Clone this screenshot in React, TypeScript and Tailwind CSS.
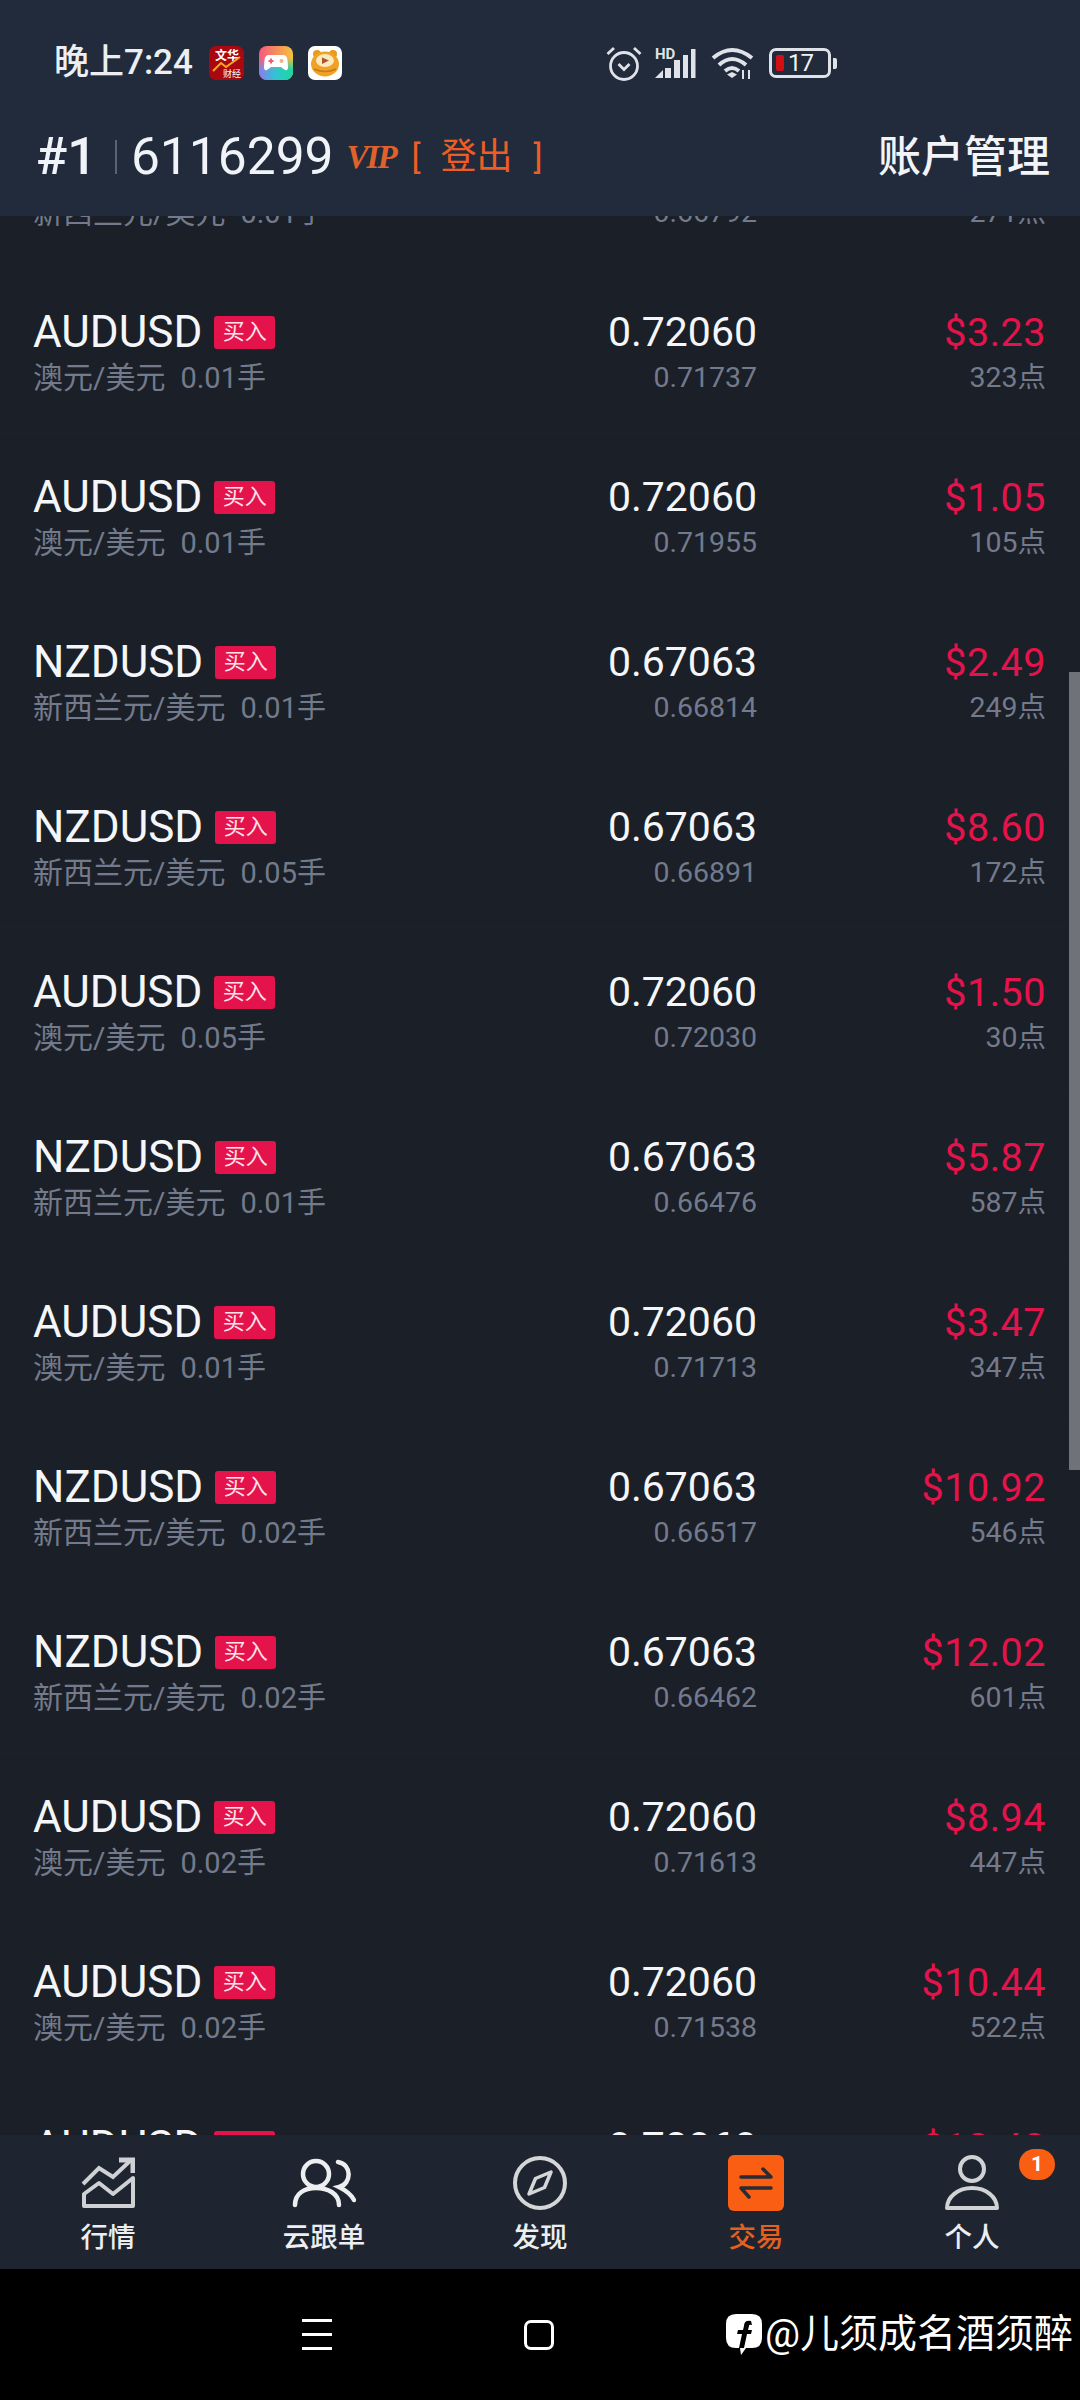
import React from 'react';

const AUD = { name: 'AUDUSD', cn: '澳元/美元', price: '0.72060' };
const NZD = { name: 'NZDUSD', cn: '新西兰元/美元', price: '0.67063' };

const rows = [
  { ...NZD, lots: '0.01', open: '0.66792', profit: '$2.71', points: '271' },
  { ...AUD, lots: '0.01', open: '0.71737', profit: '$3.23', points: '323' },
  { ...AUD, lots: '0.01', open: '0.71955', profit: '$1.05', points: '105' },
  { ...NZD, lots: '0.01', open: '0.66814', profit: '$2.49', points: '249' },
  { ...NZD, lots: '0.05', open: '0.66891', profit: '$8.60', points: '172' },
  { ...AUD, lots: '0.05', open: '0.72030', profit: '$1.50', points: '30' },
  { ...NZD, lots: '0.01', open: '0.66476', profit: '$5.87', points: '587' },
  { ...AUD, lots: '0.01', open: '0.71713', profit: '$3.47', points: '347' },
  { ...NZD, lots: '0.02', open: '0.66517', profit: '$10.92', points: '546' },
  { ...NZD, lots: '0.02', open: '0.66462', profit: '$12.02', points: '601' },
  { ...AUD, lots: '0.02', open: '0.71613', profit: '$8.94', points: '447' },
  { ...AUD, lots: '0.02', open: '0.71538', profit: '$10.44', points: '522' },
  { ...AUD, lots: '0.02', open: '0.71540', profit: '$10.40', points: '520' },
];

const NotifyIcons = () => (
  <div className="flex items-center gap-[15px] ml-[16px]">
    {/* finance app */}
    <svg width="35" height="34" viewBox="0 0 35 34">
      <rect width="35" height="34" rx="7" fill="#aa0810" />
      <text x="18" y="14" textAnchor="middle" fontSize="12" fill="#fff" fontWeight="700">文华</text>
      <path d="M4 25 L12 17 L17 21 L31 11" stroke="#f5a623" strokeWidth="2" fill="none" />
      <text x="23" y="31" textAnchor="middle" fontSize="9" fill="#fff">财经</text>
    </svg>
    {/* game app */}
    <svg width="34" height="34" viewBox="0 0 34 34">
      <defs>
        <linearGradient id="gameTop" x1="0" y1="0" x2="1" y2="0">
          <stop offset="0" stopColor="#f9567f" />
          <stop offset="1" stopColor="#f4c23c" />
        </linearGradient>
        <linearGradient id="gameBottom" x1="0" y1="0" x2="1" y2="0">
          <stop offset="0" stopColor="#8a7cf0" />
          <stop offset="0.5" stopColor="#2fc6d0" />
          <stop offset="1" stopColor="#1fd6a0" />
        </linearGradient>
        <linearGradient id="gameFade" x1="0" y1="0" x2="0" y2="1">
          <stop offset="0.35" stopColor="#fff" stopOpacity="0" />
          <stop offset="0.7" stopColor="#fff" stopOpacity="1" />
        </linearGradient>
        <mask id="gameMask">
          <rect width="34" height="34" fill="url(#gameFade)" />
        </mask>
      </defs>
      <rect width="34" height="34" rx="8" fill="url(#gameTop)" />
      <rect width="34" height="34" rx="8" fill="url(#gameBottom)" mask="url(#gameMask)" />
      <path d="M10 9 H24 Q28 9 28.500 14 L29 21 Q29 25 26 24 L22 21 H12 L8 24 Q5 25 5 21 L5.500 14 Q6 9 10 9 Z" fill="#fff" />
      <path d="M9.500 15 H14.500 M12 12.500 V17.500" stroke="#ee5f72" strokeWidth="2" />
      <circle cx="22.500" cy="15" r="2" fill="#f3b07a" />
    </svg>
    {/* tiger app */}
    <svg width="34" height="34" viewBox="0 0 34 34">
      <rect width="34" height="34" rx="7" fill="#fff" />
      <circle cx="9" cy="8" r="4" fill="#e99a1c" />
      <circle cx="25" cy="8" r="4" fill="#e99a1c" />
      <ellipse cx="17" cy="18" rx="14" ry="12.500" fill="#efa226" />
      <ellipse cx="17" cy="14.500" rx="9" ry="6.500" fill="#fde9c0" />
      <path d="M14 11.500 L21 14.500 L14 18 Z" fill="#a9562d" />
      <path d="M6 23 Q17 28 28 23" stroke="#c97a14" strokeWidth="1.500" fill="none" />
    </svg>
  </div>
);

const SystemIcons = () => (
  <div className="flex items-center text-[#dfe2e8]">
    <svg width="36" height="35" viewBox="0 0 36 35" fill="none" stroke="currentColor" strokeWidth="2.800">
      <circle cx="18" cy="20" r="13.500" />
      <path d="M12.500 18 L18 23.500 L23.500 18" />
      <path d="M1.500 8 L8 2 M34.500 8 L28 2" />
    </svg>
    <svg className="ml-[11px]" width="44" height="32" viewBox="0 0 44 32" fill="currentColor">
      <text x="2" y="12" fontSize="15" fontWeight="700">HD</text>
      <path d="M2 31 L10 23 V31 Z" />
      <rect x="12" y="21" width="6" height="10" />
      <rect x="21" y="13" width="6" height="18" />
      <rect x="30" y="8" width="5" height="23" />
      <rect x="38" y="2" width="4.500" height="29" />
    </svg>
    <svg className="ml-[14px]" width="44" height="32" viewBox="0 0 44 32" fill="none" stroke="currentColor" strokeWidth="4">
      <path d="M2 11 Q21 -5 41 11" />
      <path d="M8 18 Q21 6 35 18" />
      <path d="M14 24 Q21 18 28 24" />
      <path d="M21 31 L16 27.500 L21 25 L26 27.500 Z" fill="currentColor" stroke="none" />
      <path d="M32 23 V32 M38 23 V32" strokeWidth="2" />
    </svg>
    <div className="ml-[14px] flex items-center gap-[2px]">
      <div className="w-[62px] h-[30px] rounded-[7px] border-[3px] border-[#dfe2e8] flex items-center pl-[4px] gap-[4px] text-[24px] leading-none tracking-[-1px]">
        <div className="w-[8px] h-[16px] rounded-[2px] bg-[#d40f14]" />
        <span className="text-[#f0f2f5]">17</span>
      </div>
      <div className="w-[4px] h-[11px] rounded-r-[2px] bg-[#dfe2e8]" />
    </div>
  </div>
);

const Row = ({ row }: { row: (typeof rows)[number] }) => (
  <div className="h-[165px] border-b border-[#1e2129] pt-[42px] pl-[33px] pr-[34px] grid grid-cols-[1fr_300px_289px]">
    <div>
      <div className="flex items-center h-[44px]">
        <span className="text-[44px] leading-[44px] font-[450] text-[#f4f6fa]">{row.name}</span>
        <span className="ml-[12px] w-[61px] h-[33px] rounded-[3px] bg-[#e5134c] text-[#ffe4ea] text-[22px] leading-none flex items-center justify-center">买入</span>
      </div>
      <div className="h-[47px] text-[30px] leading-[47px] text-[#737a8b]">
        {row.cn}
        <span className="ml-[15px] text-[29px]">{row.lots}手</span>
      </div>
    </div>
    <div className="text-right">
      <div className="text-[41px] leading-[44px] font-[450] text-[#f4f6fa]">{row.price}</div>
      <div className="text-[28.500px] leading-[47px] text-[#737a8b]">{row.open}</div>
    </div>
    <div className="text-right">
      <div className="text-[39.500px] leading-[44px] tracking-[0.5px] pt-[1px] h-[44px] font-[450] text-[#e5134c]">{row.profit}</div>
      <div className="text-[28.500px] leading-[47px] text-[#737a8b]">{row.points}点</div>
    </div>
  </div>
);

const tabs = [
  {
    label: '行情',
    icon: (
      <svg width="54" height="52" viewBox="0 0 54 52" fill="none" stroke="#cfd1d4" strokeWidth="4">
        <path d="M2 27 L18 11 L32 20 L49 4" />
        <path d="M38 3 H52 V16" strokeWidth="5" />
        <path d="M3 49 V37 L18 26 L32 37 L52 21 V49 Z" strokeLinejoin="round" />
      </svg>
    ),
  },
  {
    label: '云跟单',
    icon: (
      <svg width="64" height="50" viewBox="0 0 64 50" fill="none" stroke="#eceeef" strokeWidth="4.500" strokeLinecap="round">
        <circle cx="24" cy="16" r="13" />
        <path d="M3 47 C3 35 13 30 24 30 C35 30 47 35 47 47" />
        <path d="M46 4 C60 6 60 26 47 29 C53 32 59 36 62 42" />
      </svg>
    ),
  },
  {
    label: '发现',
    icon: (
      <svg width="56" height="56" viewBox="0 0 56 56" fill="none" stroke="#d4d6d8" strokeWidth="4">
        <circle cx="28" cy="28" r="25" />
        <path d="M39 17 L32.500 32.500 L17 39 L23.500 23.500 Z" strokeLinejoin="round" strokeWidth="3.500" />
      </svg>
    ),
  },
  {
    label: '交易',
    active: true,
    icon: (
      <div className="w-[56px] h-[56px] rounded-[6px] bg-[#fa5e12]">
        <svg width="56" height="56" viewBox="0 0 56 56" fill="none" stroke="#2a2b33" strokeWidth="3.500" strokeLinecap="round" strokeLinejoin="round">
          <path d="M13 22 H43 L35 14" />
          <path d="M43 33 H13 L21 42" />
        </svg>
      </div>
    ),
  },
  {
    label: '个人',
    badge: '1',
    icon: (
      <svg width="56" height="56" viewBox="0 0 56 56" fill="none" stroke="#d0d2d4" strokeWidth="4">
        <circle cx="28" cy="14" r="12" />
        <path d="M3 53 C3 42 14 33 28 33 C42 33 53 42 53 53 Z" strokeLinejoin="round" />
      </svg>
    ),
  },
];

export default function App() {
  return (
    <div className="w-[1080px] h-[2400px] flex flex-col overflow-hidden relative bg-[#1b1f27] font-[Roboto,'Noto_Sans_CJK_SC',sans-serif]">
      {/* Header */}
      <div className="h-[216px] shrink-0 bg-[#222b3b] relative z-10">
        <div className="h-[126px] flex items-center justify-between pl-[54px] pr-[243px]">
          <div className="flex items-center">
            <span className="text-[35px] leading-[44px] font-medium text-[#eceef2]">晚上7:24</span>
            <NotifyIcons />
          </div>
          <SystemIcons />
        </div>
        <div className="flex items-center justify-between pl-[36px] pr-[30px] h-[62px]">
          <div className="flex items-center">
            <span className="text-[52px] leading-[60px] font-medium text-[#f0f3f8]">#1</span>
            <div className="ml-[18px] w-[2px] h-[34px] bg-[#5a6372]" />
            <span className="ml-[14px] text-[51.500px] leading-[60px] font-[450] text-[#f0f3f8]">6116299</span>
            <span className="ml-[13px] text-[33px] leading-[40px] font-bold italic tracking-[-2px] text-[#e0622a] font-['Liberation_Serif',serif]">VIP</span>
            <span className="ml-[16px] text-[34px] leading-[40px] text-[#ee5d23]">[</span>
            <span className="ml-[20px] text-[36px] leading-[40px] text-[#ee5d23]">登出</span>
            <span className="ml-[21px] text-[34px] leading-[40px] text-[#ee5d23]">]</span>
          </div>
          <span className="text-[43px] leading-[50px] font-medium text-[#f2f4f8]">账户管理</span>
        </div>
      </div>

      {/* Positions list */}
      <div className="flex-1 min-h-0 overflow-hidden">
        <div className="-mt-[113px]">
          {rows.map((row, i) => (
            <Row key={i} row={row} />
          ))}
        </div>
      </div>
      <div className="absolute right-0 top-[672px] w-[11px] h-[798px] bg-[#6f7278]" />

      {/* Tab bar */}
      <div className="h-[134px] shrink-0 bg-[#1f2530] grid grid-cols-5 relative">
        {tabs.map((tab) => (
          <div key={tab.label} className="relative flex flex-col items-center pt-[20px]">
            <div className="h-[56px] flex items-center justify-center">{tab.icon}</div>
            <span className={`mt-[9px] text-[27.500px] leading-[36px] font-medium ${tab.active ? 'text-[#e4601f]' : 'text-[#eceef0]'}`}>
              {tab.label}
            </span>
            {tab.badge && (
              <div className="absolute left-[155px] top-[14px] w-[36px] h-[31px] rounded-full bg-[#fa5e12] text-white text-[21px] leading-none font-bold flex items-center justify-center">
                {tab.badge}
              </div>
            )}
          </div>
        ))}
      </div>

      {/* Android nav bar */}
      <div className="h-[131px] shrink-0 bg-black relative flex items-center">
        <div className="w-[30px] ml-[302px] flex flex-col gap-[11px]">
          <div className="h-[3px] bg-white" />
          <div className="h-[3px] bg-white" />
          <div className="h-[3px] bg-white" />
        </div>
        <div className="w-[30px] h-[30px] ml-[192px] rounded-[7px] border-[3px] border-white" />
        <div className="absolute left-[724px] top-[43px] flex items-center">
          <svg width="40" height="44" viewBox="0 0 40 44">
            <path d="M12 2 H28 Q38 2 38 12 V26 Q38 36 28 36 H22 L17 43 L16 36 H12 Q2 36 2 26 V12 Q2 2 12 2 Z" fill="#fff" />
            <path d="M27 9 Q20 8 20 14 L19 18 H14 L13 22 H18 L15 36 H20 L23 22 H27 L28 18 H24 L25 14 Q25 12 28 13 Z" fill="#000" />
          </svg>
          <span className="ml-[1px] text-[39px] leading-[44px] text-white whitespace-nowrap">@儿须成名酒须醉</span>
        </div>
      </div>
    </div>
  );
}
